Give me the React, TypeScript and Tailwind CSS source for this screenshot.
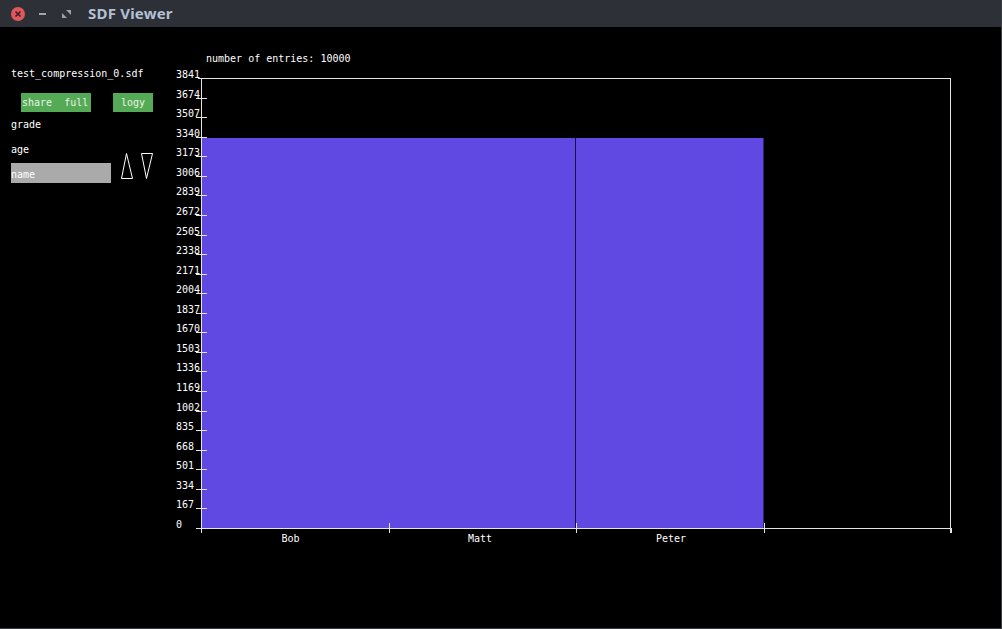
import React from "react";

const mono = { fontFamily: '"DejaVu Sans Mono", "Liberation Mono", monospace' };

const yTop = 78;
const yBottom = 528;
const yLabels = [0, 167, 334, 501, 668, 835, 1002, 1169, 1336, 1503, 1670, 1837, 2004, 2171, 2338, 2505, 2672, 2839, 3006, 3173, 3340, 3507, 3674, 3841];
const xTicks = [201, 388.5, 576, 763.5, 951];
const bins = [
  { name: "Bob", cx: 290.5 },
  { name: "Matt", cx: 480 },
  { name: "Peter", cx: 671 },
];

function TitleBar() {
  return (
    <div className="flex h-[27px] items-center bg-[#2d3037]">
      <div className="ml-[11px] grid h-[14px] w-[14px] place-items-center rounded-full bg-[#e0575c]">
        <svg width="8" height="8" viewBox="0 0 8 8">
          <path d="M1.5 1.5 L6.5 6.5 M6.5 1.5 L1.5 6.5" stroke="#3b1f22" strokeWidth="1.6" />
        </svg>
      </div>
      <div className="ml-[14px] h-[2px] w-[7px] bg-[#a2a5ab]" />
      <svg className="ml-[16px]" width="9" height="8" viewBox="0 0 9 8">
        <path d="M4 0 H9 V5 Z" fill="#9ea1a7" />
        <path d="M0 3 V8 H5 Z" fill="#9ea1a7" />
      </svg>
      <span
        className="ml-[17px] text-[15px] font-bold tracking-[0.2px] text-[#b3c1d4]"
        style={{ fontFamily: '"Noto Sans", "Open Sans", sans-serif' }}
      >
        SDF Viewer
      </span>
    </div>
  );
}

function SidePanel() {
  return (
    <div className="w-[165px] shrink-0 pl-[11px] pt-[41px] text-[10px] leading-[12px] text-white" style={mono}>
      <div className="whitespace-pre">test_compression_0.sdf</div>
      <div className="mt-[13px] flex">
        <div className="ml-[10px] h-[19px] w-[70px] whitespace-pre bg-[#55aa55] pl-[1px] pt-[4px] text-[#e9f5e9]">share  full</div>
        <div className="ml-[22px] h-[19px] w-[40px] bg-[#55aa55] pt-[4px] text-center text-[#e9f5e9]">logy</div>
      </div>
      <div className="mt-[7px]">grade</div>
      <div className="mt-[13px] flex">
        <div className="w-[100px]">
          <div>age</div>
          <div className="mt-[7px] h-[20px] bg-[#aaaaaa] pt-[6px]">name</div>
        </div>
        <div className="ml-[10px] mt-[9px] flex gap-[8px]">
          <svg width="12" height="26" viewBox="0 0 12 26">
            <polygon points="5.5,0.5 0.5,25.5 11.5,25.5" fill="none" stroke="#ffffff" strokeWidth="1" />
          </svg>
          <svg width="12" height="26" viewBox="0 0 12 26">
            <polygon points="0.5,0.5 11.5,0.5 5.5,25.5" fill="none" stroke="#ffffff" strokeWidth="1" />
          </svg>
        </div>
      </div>
    </div>
  );
}

function Histogram() {
  const step = (yBottom - yTop) / (yLabels.length - 1);
  const line = "#e4e4e4";
  return (
    <svg width="800" height="560" viewBox="165 27 800 560" style={mono}>
      <text x="206" y="62" fill="#ffffff" fontSize="10">number of entries: 10000</text>

      <rect x="201" y="138" width="374" height="390" fill="#6049e3" />
      <rect x="575" y="138" width="1" height="390" fill="#15104a" />
      <rect x="576" y="138" width="187.5" height="390" fill="#6049e3" />

      <line x1="201.5" y1={yTop} x2="201.5" y2="533" stroke={line} />
      <line x1="198" y1={yTop + 0.5} x2="951" y2={yTop + 0.5} stroke={line} />
      <line x1="950.5" y1={yTop} x2="950.5" y2="533" stroke={line} />
      <line x1="196" y1={yBottom + 0.5} x2="951" y2={yBottom + 0.5} stroke={line} />

      {yLabels.map((v, i) => {
        const y = Math.round(yBottom - i * step) + 0.5;
        return (
          <g key={v}>
            {i > 0 && i < yLabels.length - 1 && <line x1="196" y1={y} x2="207" y2={y} stroke={line} />}
            <text x="176" y={y - 1} fill="#ffffff" fontSize="10">{v}</text>
          </g>
        );
      })}

      {xTicks.map((x, i) => {
        const px = Math.round(x) + 0.5;
        return <line key={i} x1={px} y1={i === 0 || i === 4 ? 528 : 523} x2={px} y2="533" stroke={line} />;
      })}

      {bins.map((b) => (
        <text key={b.name} x={b.cx} y="542" fill="#ffffff" fontSize="10" textAnchor="middle">{b.name}</text>
      ))}
    </svg>
  );
}

export default function App() {
  return (
    <div className="flex h-[629px] w-[1002px] flex-col overflow-hidden border-b border-r border-[#3a3d44] bg-black">
      <TitleBar />
      <div className="flex flex-1">
        <SidePanel />
        <Histogram />
      </div>
    </div>
  );
}
